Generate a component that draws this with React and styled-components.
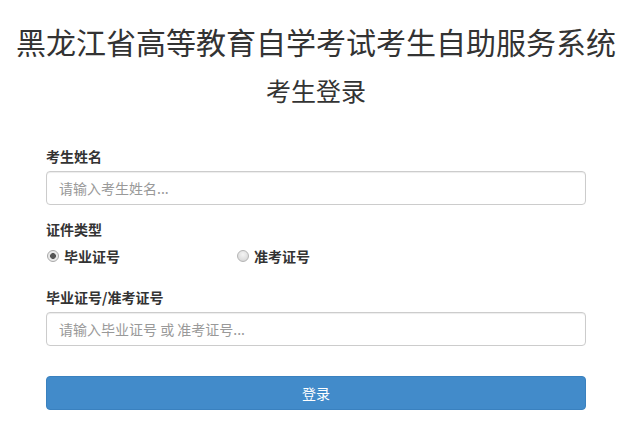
import styled, { createGlobalStyle } from 'styled-components';

const GlobalStyle = createGlobalStyle`
  body {
    margin: 0;
    background: #fff;
    color: #333;
    font-family: "Noto Sans CJK SC", "Liberation Sans", sans-serif;
    font-size: 14px;
  }
`;

const Page = styled.div`
  padding-left: 8px;
`;

const Header = styled.header`
  text-align: center;
  padding-top: 21px;
`;

const Title = styled.h1`
  margin: 0;
  font-size: 30px;
  line-height: 40px;
  font-weight: normal;
  color: #333;
  white-space: nowrap;
`;

const SubTitle = styled.h2`
  margin: 12px 0 0;
  font-size: 25px;
  line-height: 34px;
  font-weight: normal;
  color: #333;
`;

const Form = styled.form`
  width: 540px;
  margin: 39px auto 0;
`;

const Group = styled.div`
  margin-bottom: ${(p) => p.$gap || 14}px;
`;

const Label = styled.label`
  display: block;
  font-weight: bold;
  line-height: 20px;
  margin-bottom: ${(p) => p.$space ?? 5}px;
`;

const Input = styled.input`
  display: block;
  box-sizing: border-box;
  width: 100%;
  height: 34px;
  padding: 6px 12px;
  font-family: inherit;
  font-size: 14px;
  color: #555;
  background: #fff;
  border: 1px solid #ccc;
  border-radius: 4px;
  box-shadow: inset 0 1px 1px rgba(0, 0, 0, 0.075);
  outline: none;

  &::placeholder {
    color: #999;
  }
`;

const RadioRow = styled.div`
  display: grid;
  grid-template-columns: 190px auto;
  height: 20px;
  align-items: center;
`;

const Option = styled.label`
  display: flex;
  align-items: center;
  font-weight: bold;
  line-height: 20px;
`;

const Radio = styled.input.attrs({ type: 'radio' })`
  appearance: none;
  box-sizing: border-box;
  width: 12px;
  height: 12px;
  margin: 0 5px 0 1px;
  border-radius: 50%;
  border: 1px solid #b5b5b5;
  background: radial-gradient(circle at 50% 35%, #f4f4f4 0%, #dcdcdc 70%, #c9c9c9 100%);

  &:checked {
    background: radial-gradient(circle, #555 0 2.6px, #e6e6e6 3.2px, #f2f2f2 100%);
    border-color: #a8a8a8;
  }
`;

const SubmitButton = styled.button`
  display: block;
  width: 100%;
  height: 34px;
  font-family: inherit;
  font-size: 14px;
  color: #fff;
  background: #428bca;
  border: 1px solid #3a81bf;
  border-radius: 4px;
`;

export default function App() {
  return (
    <Page>
      <GlobalStyle />
      <Header>
        <Title>黑龙江省高等教育自学考试考生自助服务系统</Title>
        <SubTitle>考生登录</SubTitle>
      </Header>
      <Form onSubmit={(e) => e.preventDefault()}>
        <Group $gap={14}>
          <Label htmlFor="name">考生姓名</Label>
          <Input id="name" placeholder="请输入考生姓名..." />
        </Group>
        <Group $gap={21}>
          <Label $space={7}>证件类型</Label>
          <RadioRow>
            <Option>
              <Radio name="kind" defaultChecked />
              毕业证号
            </Option>
            <Option>
              <Radio name="kind" />
              准考证号
            </Option>
          </RadioRow>
        </Group>
        <Group $gap={30}>
          <Label htmlFor="num">毕业证号/准考证号</Label>
          <Input id="num" placeholder="请输入毕业证号 或 准考证号..." />
        </Group>
        <SubmitButton type="submit">登录</SubmitButton>
      </Form>
    </Page>
  );
}
